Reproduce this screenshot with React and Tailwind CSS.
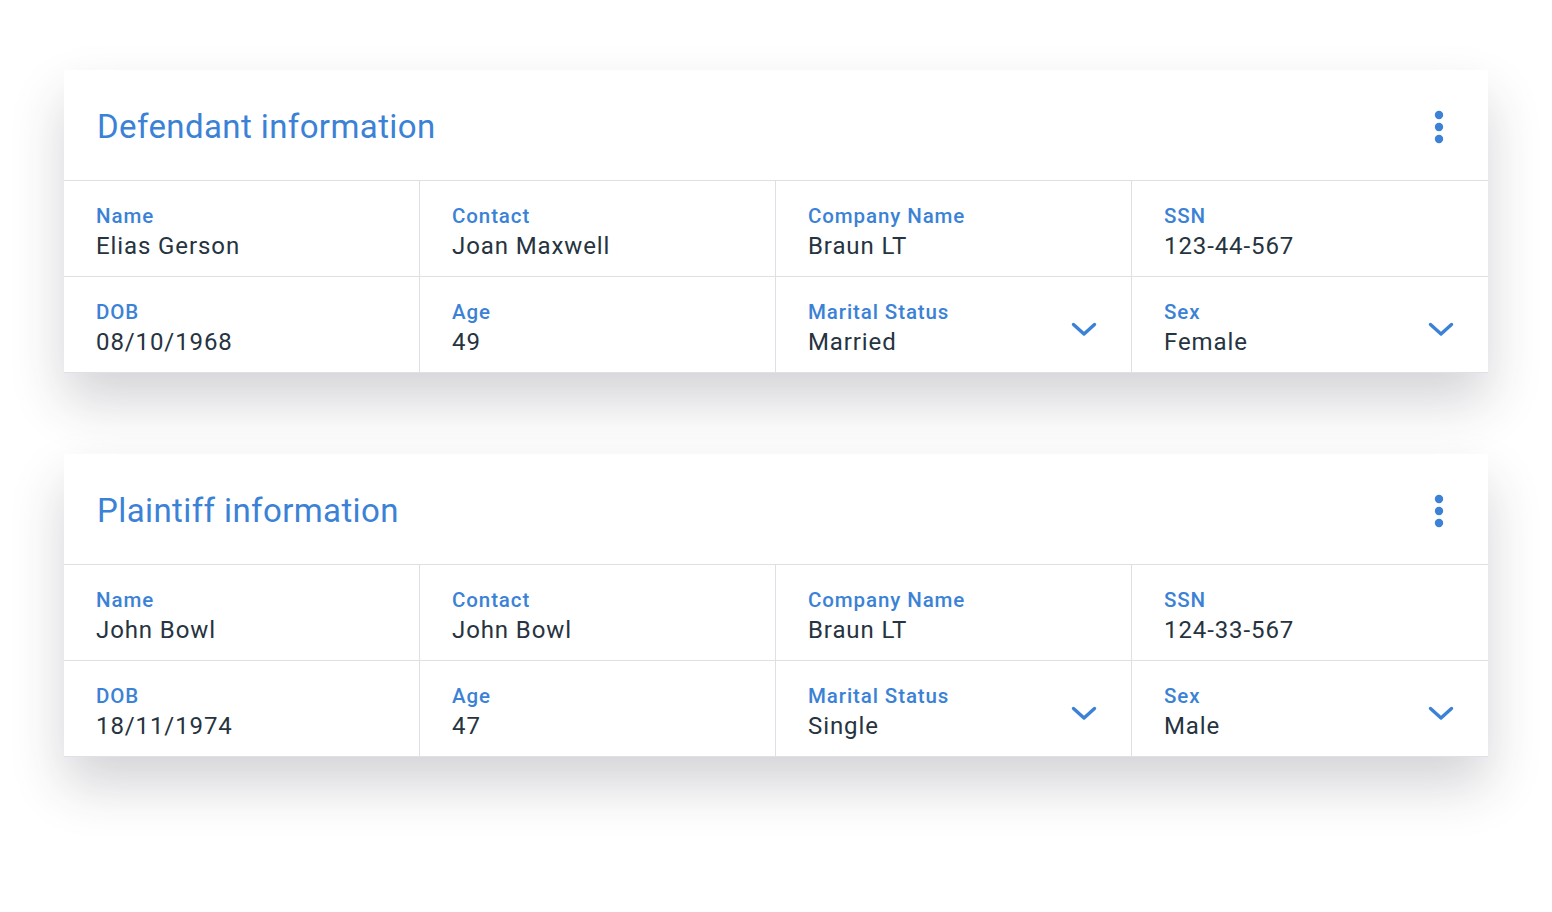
import React from "react";

const BLUE = "text-[#3b82d6]";

const Chevron = () => (
  <svg width="26" height="16" viewBox="0 0 26 16" fill="none" className="shrink-0">
    <path d="M2.5 3.5l10.5 9.5 10.5-9.5" stroke="#3b82d6" strokeWidth="3.4" strokeLinecap="round" strokeLinejoin="round" />
  </svg>
);

const Dots = () => (
  <svg width="10" height="34" viewBox="0 0 10 34" className="shrink-0">
    <circle cx="5" cy="5" r="4.2" fill="#3b82d6" />
    <circle cx="5" cy="17" r="4.2" fill="#3b82d6" />
    <circle cx="5" cy="29" r="4.2" fill="#3b82d6" />
  </svg>
);

const Cell = ({ label, value, select, last }) => (
  <div
    className={`flex items-center justify-between h-[95px] pt-[8px] pl-[32px] pr-[34px] ${
      last ? "" : "border-r border-[#dde0e4]"
    }`}
  >
    <div className="flex flex-col">
      <span className={`text-[20.5px] leading-[26px] font-medium tracking-[0.9px] ${BLUE}`}>{label}</span>
      <span className="text-[24px] leading-[34px] tracking-[0.9px] text-[#263340]">{value}</span>
    </div>
    {select && <Chevron />}
  </div>
);

const InfoCard = ({ title, person }) => {
  const rows = [
    [
      { label: "Name", value: person.name },
      { label: "Contact", value: person.contact },
      { label: "Company Name", value: person.company },
      { label: "SSN", value: person.ssn },
    ],
    [
      { label: "DOB", value: person.dob },
      { label: "Age", value: person.age },
      { label: "Marital Status", value: person.marital, select: true },
      { label: "Sex", value: person.sex, select: true },
    ],
  ];

  return (
    <div className="bg-white shadow-[0_28px_50px_rgba(40,40,60,0.2)] border-b border-[#dde0e4]">
      <div className="flex items-center justify-between h-[111px] pt-[3px] pl-[33px] pr-[44px] border-b border-[#dde0e4]">
        <h2 className={`text-[33px] leading-none tracking-[0.4px] ${BLUE}`}>{title}</h2>
        <Dots />
      </div>
      {rows.map((row, i) => (
        <div
          key={i}
          className={`grid grid-cols-4 ${i === 0 ? "border-b border-[#dde0e4]" : ""}`}
        >
          {row.map((c, j) => (
            <Cell key={c.label} {...c} last={j === 3} />
          ))}
        </div>
      ))}
    </div>
  );
};

export default function App() {
  return (
    <div
      className="min-h-[912px] bg-white px-[64px] pt-[70px] flex flex-col gap-[81px]"
      style={{ fontFamily: "Roboto, 'Noto Sans', sans-serif" }}
    >
      <InfoCard
        title="Defendant information"
        person={{
          name: "Elias Gerson",
          contact: "Joan Maxwell",
          company: "Braun LT",
          ssn: "123-44-567",
          dob: "08/10/1968",
          age: "49",
          marital: "Married",
          sex: "Female",
        }}
      />
      <InfoCard
        title="Plaintiff information"
        person={{
          name: "John Bowl",
          contact: "John Bowl",
          company: "Braun LT",
          ssn: "124-33-567",
          dob: "18/11/1974",
          age: "47",
          marital: "Single",
          sex: "Male",
        }}
      />
    </div>
  );
}
